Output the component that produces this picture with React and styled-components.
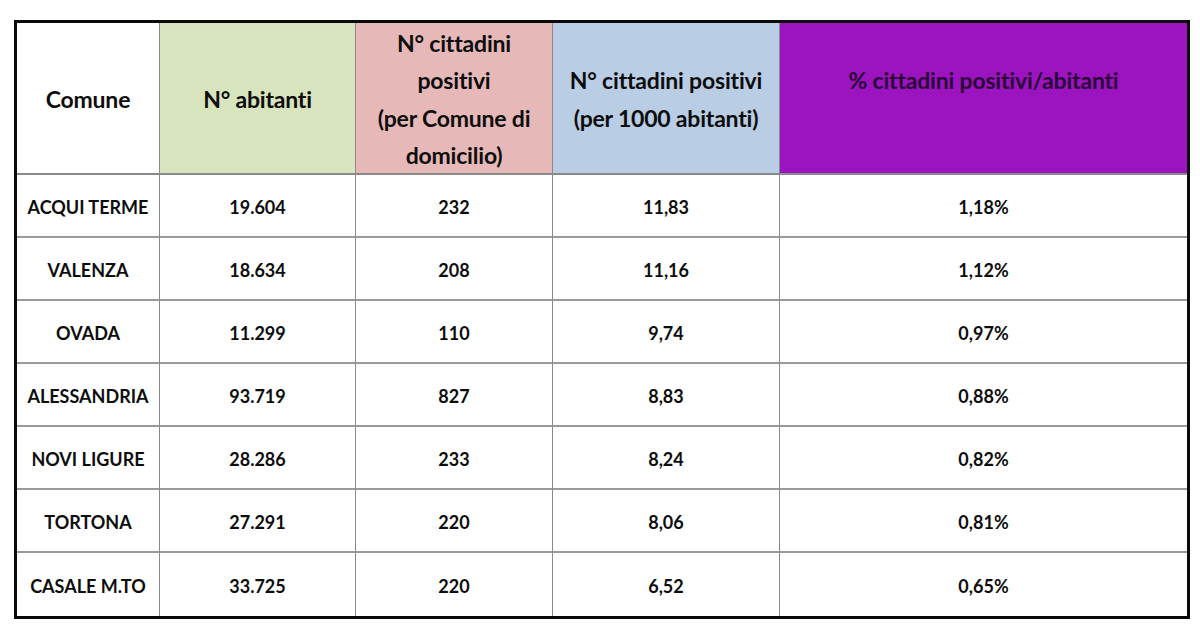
import React from "react";
import styled, { createGlobalStyle } from "styled-components";

const Global = createGlobalStyle`
  html, body { margin: 0; padding: 0; background: #ffffff; }
  body { font-family: Lato, "Open Sans", sans-serif; }
`;

const Page = styled.div`
  width: 1200px;
  height: 640px;
  padding: 20px 0 0 14px;
  box-sizing: border-box;
  background: #fff;
`;

const Grid = styled.div`
  display: grid;
  grid-template-columns: 143px 196px 197px 227px 407px;
  grid-template-rows: 152px repeat(7, 63px);
  width: 1176px;
  box-sizing: border-box;
  border: 3px solid #0a0a0a;
  background: #fff;
`;

const Head = styled.div`
  background: ${(p) => p.$bg || "#fff"};
  color: ${(p) => p.$fg || "#0d0d0d"};
  display: flex;
  align-items: center;
  justify-content: center;
  text-align: center;
  font-weight: 700;
  font-size: 23px;
  line-height: 37.5px;
  padding-top: 3px;
  padding-bottom: ${(p) => p.$pb || 0}px;
  box-sizing: border-box;
  border-right: ${(p) => (p.$last ? "none" : "1px solid #8a8a8a")};
  border-bottom: 2px solid #8a8a8a;
  letter-spacing: -0.2px;
`;

const Cell = styled.div`
  display: flex;
  align-items: center;
  justify-content: center;
  font-weight: 700;
  font-size: 18px;
  color: #0d0d0d;
  box-sizing: border-box;
  border-right: ${(p) => (p.$last ? "none" : "1px solid #8a8a8a")};
  border-bottom: ${(p) => (p.$lastRow ? "none" : "2px solid #9a9a9a")};
  padding-top: 2px;
`;

const rows = [
  ["ACQUI TERME", "19.604", "232", "11,83", "1,18%"],
  ["VALENZA", "18.634", "208", "11,16", "1,12%"],
  ["OVADA", "11.299", "110", "9,74", "0,97%"],
  ["ALESSANDRIA", "93.719", "827", "8,83", "0,88%"],
  ["NOVI LIGURE", "28.286", "233", "8,24", "0,82%"],
  ["TORTONA", "27.291", "220", "8,06", "0,81%"],
  ["CASALE M.TO", "33.725", "220", "6,52", "0,65%"],
];

export default function App() {
  return (
    <Page>
      <Global />
      <Grid>
        <Head>Comune</Head>
        <Head $bg="#d7e4bd">N° abitanti</Head>
        <Head $bg="#e6b9b8">
          N° cittadini
          <br />
          positivi
          <br />
          (per Comune di
          <br />
          domicilio)
        </Head>
        <Head $bg="#b9cde5">
          N° cittadini positivi
          <br />
          (per 1000 abitanti)
        </Head>
        <Head $bg="#9b14bf" $fg="#2a0838" $pb={38} $last>
          % cittadini positivi/abitanti
        </Head>
        {rows.map((r, i) =>
          r.map((v, j) => (
            <Cell key={i + "-" + j} $last={j === 4} $lastRow={i === rows.length - 1}>
              {v}
            </Cell>
          ))
        )}
      </Grid>
    </Page>
  );
}
